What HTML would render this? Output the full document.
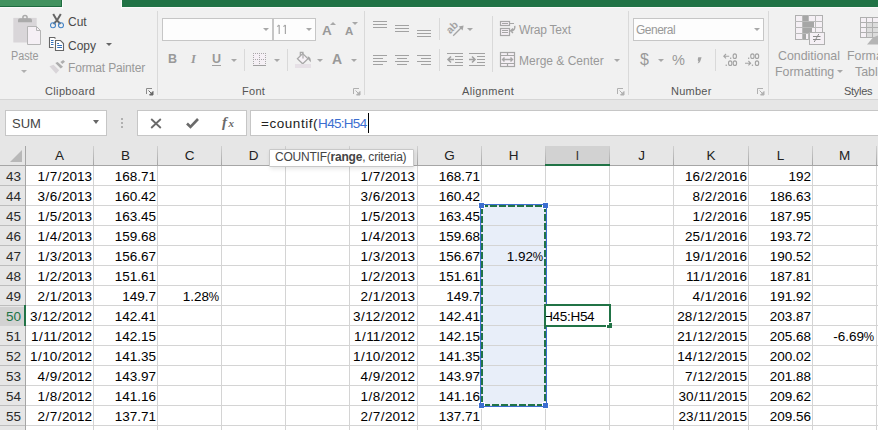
<!DOCTYPE html>
<html><head><meta charset="utf-8">
<style>
*{margin:0;padding:0;box-sizing:border-box}
html,body{width:878px;height:430px;overflow:hidden;background:#e6e6e6;font-family:"Liberation Sans",sans-serif;position:relative}
.a{position:absolute}
.t{position:absolute;white-space:nowrap;font-size:11.7px;line-height:14px;color:#444}
.dis{color:#999}
.lbl{position:absolute;white-space:nowrap;font-size:11.7px;line-height:14px;color:#555}
.sep{position:absolute;width:1px;background:#d9d9d9}
.dd{position:absolute;width:0;height:0;border-left:3px solid transparent;border-right:3px solid transparent;border-top:3px solid #a8a8a8}
.vl{position:absolute;top:166px;width:1px;height:264px;background:#d4d4d4}
.hv{position:absolute;top:146px;width:1px;height:19px;background:linear-gradient(#d0d0d0,#a6a6a6)}
.hl{position:absolute;left:26px;width:852px;height:1px;background:#d4d4d4}
.rh{position:absolute;left:0;width:25px;height:1px;background:#bdbdbd}
.ch{position:absolute;top:146px;height:19px;line-height:19px;text-align:center;font-size:13.5px;color:#222;white-space:nowrap}
.ch.sel{background:#d2d2d2;color:#3a3a3a;border-bottom:2px solid #217346;height:20px}
.rn{position:absolute;left:0;width:24px;height:19px;line-height:20px;text-align:right;padding-right:3px;font-size:13.5px;color:#2a2a2a}
.rn.sel{background:#d2d2d2;color:#217346}
.s{padding:0 .5px}
.pc{display:inline-block;transform:scaleX(.86);transform-origin:100% 50%;margin-left:-1.6px;margin-right:0.6px}
.c{position:absolute;height:19px;line-height:20px;font-size:13.5px;color:#000;white-space:nowrap;text-align:right}
</style></head><body>
<!-- top tab bar -->
<div class="a" style="left:0;top:0;width:878px;height:7px;background:#217346"></div>
<div class="a" style="left:0;top:0;width:62px;height:7px;background:#42925f;border-right:1px solid #1e6b3f;border-bottom:1px solid #1e6b3f"></div>
<div class="a" style="left:62px;top:0;width:60px;height:8px;background:#f1f1f1;border-left:1px solid #fbfbfb;border-right:1px solid #fbfbfb"></div>
<!-- ribbon -->
<div class="a" style="left:0;top:7px;width:878px;height:92px;background:#f1f1f1;border-top:1px solid #fafafa"></div>
<div class="a" style="left:62px;top:0;width:60px;height:9px;background:#f1f1f1;border-left:1px solid #fbfbfb;border-right:1px solid #fbfbfb"></div>
<div class="a" style="left:0;top:99px;width:878px;height:1px;background:#d5d5d5"></div>
<!-- Clipboard -->
<svg class="a" style="left:12px;top:14px" width="31" height="32" viewBox="0 0 31 32">
 <rect x="1.3" y="3.9" width="23.4" height="24.6" fill="#d9d6d9"/>
 <path d="M6 8.2V6.2Q6 4.3 8 4.3H18Q20 4.3 20 6.2V8.2Z" fill="#ababab"/>
 <circle cx="13" cy="3.6" r="2.1" fill="none" stroke="#ababab" stroke-width="1.5"/>
 <path d="M15.5 12.5H24.5L28.5 16.5V30.5H15.5Z" fill="#f5f0f5" stroke="#b5b5b5" stroke-width="1"/>
 <path d="M24.5 12.5V16.5H28.5" fill="none" stroke="#b5b5b5" stroke-width="1"/>
</svg>
<div class="t dis" style="left:11px;top:49px;font-size:12px;transform:scaleX(0.9);transform-origin:left">Paste</div>
<div class="dd" style="left:21px;top:70px;border-top-color:#b0b0b0;border-left-width:3px;border-right-width:3px;border-top-width:3px"></div>

<svg class="a" style="left:50px;top:12px" width="14" height="17" viewBox="0 0 14 17">
 <path d="M3.2 2L7 8.5L10.5 12M10.8 2L7 8.5L3.5 12" stroke="#666" stroke-width="2" fill="none"/>
 <circle cx="3" cy="13.3" r="2.5" fill="none" stroke="#4584c6" stroke-width="1.1"/>
 <circle cx="11" cy="13.3" r="2.5" fill="none" stroke="#4584c6" stroke-width="1.1"/>
</svg>
<div class="t" style="left:68px;top:15px;font-size:12px;color:#4a4a4a">Cut</div>

<svg class="a" style="left:48px;top:36px" width="17" height="16" viewBox="0 0 17 16">
 <path d="M1.5 1.5H6.5L7.5 2.5V11.5H1.5Z" fill="#fff"/>
 <path d="M5.5 11.5H1.5V1.5H6.5L7.5 2.5" fill="none" stroke="#666" stroke-width="1.1"/>
 <path d="M3 4.5H5.5M3 6.5H5.5M3 8.5H5.5" stroke="#3470b8" stroke-width="1"/>
 <path d="M7.5 4.5H12.5L15.5 7.5V14.5H7.5Z" fill="#fff" stroke="#666" stroke-width="1.1"/>
 <path d="M9.2 7.5H11M9.2 9.5H14M9.2 11.5H14" stroke="#3470b8" stroke-width="1"/>
</svg>
<div class="t" style="left:68px;top:39px;font-size:12px;color:#4a4a4a">Copy</div>
<div class="dd" style="left:106px;top:43px;border-top-color:#666;border-left-width:3px;border-right-width:3px"></div>

<svg class="a" style="left:49px;top:59px" width="17" height="16" viewBox="0 0 17 16">
 <path d="M0.5 7.2L4.5 5.8L10.2 11.2L7 14.7Z" fill="#d9d5d9"/>
 <path d="M6.3 4L8.6 3L14 7.7L11.7 9.6Z" fill="#adadad"/>
 <path d="M11.4 3L14.2 1L16 2.8L13.3 5.1Z" fill="#adadad"/>
</svg>
<div class="t dis" style="left:68px;top:61px;font-size:12px;letter-spacing:-0.17px">Format Painter</div>

<div class="lbl" style="left:45px;top:84px;font-size:11px;letter-spacing:0.35px">Clipboard</div>
<svg class="a" style="left:146px;top:88px" width="8" height="8" viewBox="0 0 8 8"><path d="M0.5 6V0.5H6" fill="none" stroke="#8a8a8a" stroke-width="1"/><path d="M2.5 2.5L7 7M7 3.5V7H3.5Z" stroke="#666" fill="#666" stroke-width="1"/></svg>
<div class="sep" style="left:157px;top:11px;height:84px"></div>

<!-- Font -->
<div class="a" style="left:162px;top:18px;width:111px;height:23px;background:#fdfdfd;border:1px solid #c6c6c6"></div>
<div class="a" style="left:273px;top:18px;width:43px;height:23px;background:#fdfdfd;border:1px solid #c6c6c6"></div>
<div class="dd" style="left:263px;top:28px"></div>
<div class="dd" style="left:306px;top:28px"></div>
<svg class="a" style="left:276px;top:24px" width="12" height="11" viewBox="0 0 12 11" stroke="#a8a8a8" stroke-width="1.2" fill="none"><path d="M3.2 1V10M1.2 2.6L3.2 1M9.4 1V10M7.4 2.6L9.4 1"/></svg>
<div class="t dis" style="left:322px;top:23px;font-size:13.5px;line-height:16px;font-weight:bold">A</div>
<div class="dd" style="left:330px;top:22px;border-top:none;border-bottom:3px solid #a8a8a8;border-left-width:3px;border-right-width:3px"></div>
<div class="t dis" style="left:345px;top:24px;font-size:11.5px;line-height:14px;font-weight:bold">A</div>
<div class="dd" style="left:352px;top:22px;border-top-width:3px;border-left-width:3px;border-right-width:3px"></div>

<div class="t dis" style="left:168px;top:52px;font-size:12.5px;font-weight:bold">B</div>
<div class="t dis" style="left:191px;top:52px;font-size:12.5px;font-family:'Liberation Serif',serif;font-style:italic;font-weight:bold">I</div>
<div class="t dis" style="left:212px;top:52px;font-size:12.5px;font-weight:bold">U</div>
<div class="a" style="left:212px;top:65px;width:9px;height:1px;background:#a0a0a0"></div>
<div class="dd" style="left:231px;top:59px"></div>
<div class="sep" style="left:244px;top:49px;height:22px"></div>
<svg class="a" style="left:252px;top:52px" width="15" height="15" viewBox="0 0 15 15">
 <rect x="1" y="1" width="13" height="12" fill="#f5f0f5"/>
 <path d="M1.5 1V13M7.5 1V13M13.5 1V13M1 1.5H14M1 7.5H14" stroke="#a8a8a8" stroke-width="1" stroke-dasharray="1 1"/>
 <path d="M1 13.5H14" stroke="#a0a0a0" stroke-width="1"/>
</svg>
<div class="dd" style="left:274px;top:59px"></div>
<div class="sep" style="left:287px;top:49px;height:22px"></div>
<svg class="a" style="left:295px;top:51px" width="17" height="18" viewBox="0 0 17 18">
 <path d="M2.4 7.7L7.7 2.6L13 7.7L7.7 12.8Z" fill="#f7f2f7" stroke="#a8a8a8" stroke-width="1.2"/>
 <path d="M5.3 4.8V1.3H8V7.5" stroke="#a8a8a8" stroke-width="1.2" fill="none"/>
 <path d="M12.6 5.2C15.2 5.8 16.2 8.2 15.8 11.3L13.4 8.6Z" fill="#a4a4a4"/>
 <rect x="0" y="13" width="16" height="4" fill="#e6e0e6"/>
</svg>
<div class="dd" style="left:317px;top:59px"></div>
<div class="t dis" style="left:332px;top:51px;font-size:14px;line-height:16px;font-weight:bold">A</div>
<div class="dd" style="left:351px;top:59px"></div>
<div class="lbl" style="left:242px;top:84px;font-size:11px;letter-spacing:0.3px">Font</div>
<svg class="a" style="left:353px;top:88px" width="8" height="8" viewBox="0 0 8 8"><path d="M0.5 6V0.5H6" fill="none" stroke="#b0b0b0" stroke-width="1"/><path d="M2.5 2.5L7 7M7 3.5V7H3.5Z" stroke="#b0b0b0" fill="#b0b0b0" stroke-width="1"/></svg>
<div class="sep" style="left:364px;top:11px;height:84px"></div>

<!-- Alignment -->
<svg class="a" style="left:370px;top:15px" width="64" height="54" viewBox="0 0 64 54" stroke="#a2a2a2" stroke-width="1">
 <path d="M3 6.5H17M3 9.5H17M3 12.5H17"/>
 <path d="M25 10.5H39M25 13.5H39M25 16.5H39"/>
 <path d="M47 15.5H61M47 18.5H61M47 21.5H61"/>
 <path d="M3 40.5H17M3 43.5H13M3 46.5H17M3 49.5H13"/>
 <path d="M25 40.5H39M27 43.5H37M25 46.5H39M27 49.5H37"/>
 <path d="M47 40.5H61M51 43.5H61M47 46.5H61M51 49.5H61"/>
</svg>
<div class="sep" style="left:439px;top:18px;height:22px"></div>
<div class="sep" style="left:439px;top:49px;height:22px"></div>
<svg class="a" style="left:446px;top:20px" width="20" height="17" viewBox="0 0 20 17">
 <text x="0" y="0" transform="translate(4.2,14.2) rotate(-45)" font-family="Liberation Sans" font-weight="bold" font-size="10.5" fill="#a4a4a4">ab</text>
 <path d="M7.2 15.8L15.5 7.5" stroke="#a4a4a4" stroke-width="1.3" fill="none"/>
 <path d="M17.6 5.4L12.6 6.4L16.6 10.4Z" fill="#a4a4a4"/>
</svg>
<div class="dd" style="left:467px;top:28px"></div>
<svg class="a" style="left:446px;top:51px" width="40" height="16" viewBox="0 0 40 16" stroke="#a2a2a2" stroke-width="1" fill="none">
 <path d="M1 2.5H17M9 5.5H17M9 8.5H17M9 11.5H17M1 14.5H17"/>
 <path d="M8 8.5H2M5 5.5L2 8.5L5 11.5" stroke-width="1.6"/>
 <path d="M23 2.5H39M31 5.5H39M31 8.5H39M31 11.5H39M23 14.5H39"/>
 <path d="M23 8.5H29M26 5.5L29 8.5L26 11.5" stroke-width="1.6"/>
</svg>
<div class="sep" style="left:492px;top:16px;height:56px"></div>
<svg class="a" style="left:499px;top:20px" width="18" height="17" viewBox="0 0 18 17" fill="none" stroke="#a6a6a6" stroke-width="1.2">
 <rect x="1.5" y="1.5" width="9" height="4" fill="#f5f0f5"/>
 <path d="M3 3.5H9M10.5 3.5H15"/>
 <rect x="1.5" y="8.5" width="9" height="7" fill="#f5f0f5"/>
 <path d="M3 10.5H9M3 12.5H9"/>
 <path d="M15.8 5.8C16.2 9 14.8 10.8 11.8 10.8M14 8.6L11.6 10.8L14 13" stroke-width="1.4"/>
</svg>
<div class="t dis" style="left:519px;top:23px;font-size:12px;letter-spacing:-0.2px">Wrap Text</div>
<svg class="a" style="left:499px;top:51px" width="17" height="17" viewBox="0 0 17 17" fill="none" stroke="#a6a6a6" stroke-width="1.2">
 <rect x="1.5" y="1.5" width="14" height="14" fill="#f5f0f5"/>
 <path d="M1.5 4.5H15.5M1.5 12.5H15.5M8.5 1.5V4.5M8.5 12.5V15.5"/>
 <path d="M3.5 8.5H13.5M5.5 6.5L3.5 8.5L5.5 10.5M11.5 6.5L13.5 8.5L11.5 10.5" stroke-width="1.4"/>
</svg>
<div class="t dis" style="left:519px;top:54px;font-size:12px">Merge &amp; Center</div>
<div class="dd" style="left:614px;top:59px"></div>
<div class="lbl" style="left:462px;top:84px;font-size:11px;letter-spacing:0.35px">Alignment</div>
<svg class="a" style="left:617px;top:88px" width="8" height="8" viewBox="0 0 8 8"><path d="M0.5 6V0.5H6" fill="none" stroke="#b0b0b0" stroke-width="1"/><path d="M2.5 2.5L7 7M7 3.5V7H3.5Z" stroke="#b0b0b0" fill="#b0b0b0" stroke-width="1"/></svg>
<div class="sep" style="left:628px;top:11px;height:84px"></div>

<!-- Number -->
<div class="a" style="left:633px;top:18px;width:131px;height:23px;background:#fdfdfd;border:1px solid #c6c6c6"></div>
<div class="t dis" style="left:636px;top:23px;font-size:12px;letter-spacing:-0.5px">General</div>
<div class="dd" style="left:754px;top:28px"></div>
<div class="t dis" style="left:640px;top:51px;font-size:16px;line-height:18px">$</div>
<div class="dd" style="left:658px;top:59px;border-left-width:3px;border-right-width:3px;border-top-width:3px"></div>
<div class="t dis" style="left:672px;top:52px;font-size:14.5px;line-height:16px">%</div>
<svg class="a" style="left:696px;top:56px" width="7" height="8" viewBox="0 0 7 8"><path d="M2.2 1.2H5.6L4.2 5.6Q3.6 7.2 1.6 7.4L2.6 5.4Q1.2 5 2.2 1.2Z" fill="#a4a4a4"/></svg>
<div class="sep" style="left:715px;top:49px;height:22px"></div>



<svg class="a" style="left:722px;top:53px" width="38" height="14" viewBox="0 0 38 14" fill="none" stroke="#a4a4a4" stroke-width="1.1">
 <path d="M1.8 3.2H7.2M4 1L1.8 3.2L4 5.4"/>
 <rect x="8" y="4.6" width="1.3" height="1.3" fill="#a4a4a4" stroke="none"/>
 <ellipse cx="12.8" cy="3.2" rx="1.7" ry="2.3"/>
 <rect x="3.6" y="11.6" width="1.3" height="1.3" fill="#a4a4a4" stroke="none"/>
 <ellipse cx="8.2" cy="10.2" rx="1.7" ry="2.3"/>
 <ellipse cx="12.9" cy="10.2" rx="1.7" ry="2.3"/>
 <rect x="26" y="4.6" width="1.3" height="1.3" fill="#a4a4a4" stroke="none"/>
 <ellipse cx="30.4" cy="3.2" rx="1.7" ry="2.3"/>
 <ellipse cx="35" cy="3.2" rx="1.7" ry="2.3"/>
 <path d="M23 10.2H28.6M26.4 8L28.6 10.2L26.4 12.4"/>
 <rect x="29.8" y="11.6" width="1.3" height="1.3" fill="#a4a4a4" stroke="none"/>
 <ellipse cx="35" cy="10.2" rx="1.7" ry="2.3"/>
</svg>
<div class="lbl" style="left:671px;top:84px;font-size:11px;letter-spacing:0.25px">Number</div>
<svg class="a" style="left:757px;top:88px" width="8" height="8" viewBox="0 0 8 8"><path d="M0.5 6V0.5H6" fill="none" stroke="#b0b0b0" stroke-width="1"/><path d="M2.5 2.5L7 7M7 3.5V7H3.5Z" stroke="#b0b0b0" fill="#b0b0b0" stroke-width="1"/></svg>
<div class="sep" style="left:768px;top:11px;height:84px"></div>

<!-- Styles -->
<svg class="a" style="left:795px;top:15px" width="31" height="31" viewBox="0 0 31 31">
 <rect x="0.5" y="0.5" width="27" height="24" fill="#f5f0f5" stroke="#b0b0b0"/>
 <path d="M7.5 0V25M13.5 0V25M20.5 0V25M0 6.5H28M0 12.5H28M0 18.5H28" stroke="#bababa" stroke-width="1"/>
 <rect x="8" y="1" width="5" height="5" fill="#a6a6a6"/>
 <rect x="8" y="7" width="11" height="5" fill="#a6a6a6"/>
 <rect x="8" y="13" width="9" height="5" fill="#a6a6a6"/>
 <rect x="8" y="19" width="3" height="5" fill="#a6a6a6"/>
 <rect x="14.5" y="17.5" width="15" height="12" fill="#f5f0f5" stroke="#b0b0b0"/>
 <path d="M18 21.5H25.5M18 24.5H25.5M23.8 19L19.2 27" stroke="#8a8a8a" stroke-width="1"/>
</svg>
<div class="t dis" style="left:778px;top:49px;font-size:12.4px">Conditional</div>
<div class="t dis" style="left:775px;top:65px;font-size:12.4px">Formatting</div>
<div class="dd" style="left:837px;top:70px;border-left-width:3px;border-right-width:3px;border-top-width:3px"></div>
<svg class="a" style="left:860px;top:17px" width="18" height="28" viewBox="0 0 18 28">
 <rect x="0.5" y="0.5" width="20" height="20" fill="#f5f0f5" stroke="#b0b0b0"/>
 <rect x="7" y="6" width="14" height="14" fill="#dcdcdc"/>
 <path d="M6.5 0V21M12.5 0V21M0 5.5H21M0 10.5H21M0 15.5H21" stroke="#b0b0b0" stroke-width="1"/>
 <path d="M7 27.5L13 20.5L18 18.5V27.5Z" fill="#b5b5b5"/>
</svg>
<div class="t dis" style="left:847px;top:49px;font-size:12.4px">Format as</div>
<div class="t dis" style="left:855px;top:65px;font-size:12.4px">Table</div>
<div class="lbl" style="left:844px;top:84px;font-size:11px;letter-spacing:-0.3px">Styles</div>

<!-- formula bar -->
<div class="a" style="left:5px;top:110px;width:102px;height:26px;background:#fff;border:1px solid #c6c6c6"></div>
<div class="t" style="left:12px;top:116px;font-size:13px;line-height:15px;color:#444">SUM</div>
<div class="dd" style="left:93px;top:120px;border-top-color:#666;border-left-width:3.5px;border-right-width:3.5px;border-top-width:4px"></div>
<div class="a" style="left:121px;top:118px;width:2px;height:2px;background:#b0b0b0"></div>
<div class="a" style="left:121px;top:122px;width:2px;height:2px;background:#b0b0b0"></div>
<div class="a" style="left:121px;top:126px;width:2px;height:2px;background:#b0b0b0"></div>
<div class="a" style="left:137px;top:110px;width:110px;height:26px;background:#fff;border:1px solid #c6c6c6"></div>
<svg class="a" style="left:150px;top:118px" width="12" height="11" viewBox="0 0 12 11"><path d="M1.2 1L10.8 10M10.8 1L1.2 10" stroke="#6a6a6a" stroke-width="1.8"/></svg>
<svg class="a" style="left:185px;top:117px" width="15" height="13" viewBox="0 0 15 13"><path d="M2 6.5L5.5 10L13 2" stroke="#6a6a6a" stroke-width="2.6" fill="none"/></svg>
<svg class="a" style="left:220px;top:114px" width="18" height="17" viewBox="0 0 18 17"><text x="2" y="13" font-family="Liberation Serif" font-style="italic" font-weight="bold" font-size="15" fill="#6a6a6a">f</text><text x="8.5" y="13" font-family="Liberation Serif" font-style="italic" font-weight="bold" font-size="11" fill="#6a6a6a">x</text></svg>
<div class="a" style="left:250px;top:110px;width:628px;height:26px;background:#fff;border:1px solid #c6c6c6;border-right:none"></div>
<div class="t" style="left:261px;top:116px;font-size:13.5px;line-height:16px;color:#222"><span style="letter-spacing:0.55px">=countif(</span><span style="color:#3c6ed0;letter-spacing:-0.7px">H45:H54</span></div>
<div class="a" style="left:368px;top:113px;width:1px;height:20px;background:#000"></div>
<!-- grid -->
<div style="position:absolute;left:26px;top:166px;width:852px;height:264px;background:#fff"></div>
<div style="position:absolute;left:481px;top:205px;width:65px;height:201px;background:#e8eef9"></div>
<div class="vl" style="left:93px"></div>
<div class="hv" style="left:93px"></div>
<div class="vl" style="left:157px"></div>
<div class="hv" style="left:157px"></div>
<div class="vl" style="left:221px"></div>
<div class="hv" style="left:221px"></div>
<div class="vl" style="left:285px"></div>
<div class="hv" style="left:285px"></div>
<div class="vl" style="left:349px"></div>
<div class="hv" style="left:349px"></div>
<div class="vl" style="left:417px"></div>
<div class="hv" style="left:417px"></div>
<div class="vl" style="left:481px"></div>
<div class="hv" style="left:481px"></div>
<div class="vl" style="left:545px"></div>
<div class="hv" style="left:545px"></div>
<div class="vl" style="left:609px"></div>
<div class="hv" style="left:609px"></div>
<div class="vl" style="left:673px"></div>
<div class="hv" style="left:673px"></div>
<div class="vl" style="left:748px"></div>
<div class="hv" style="left:748px"></div>
<div class="vl" style="left:812px"></div>
<div class="hv" style="left:812px"></div>
<div class="vl" style="left:876px"></div>
<div class="hv" style="left:876px"></div>
<div class="hl" style="top:185px"></div>
<div class="rh" style="top:185px"></div>
<div class="hl" style="top:205px"></div>
<div class="rh" style="top:205px"></div>
<div class="hl" style="top:225px"></div>
<div class="rh" style="top:225px"></div>
<div class="hl" style="top:245px"></div>
<div class="rh" style="top:245px"></div>
<div class="hl" style="top:265px"></div>
<div class="rh" style="top:265px"></div>
<div class="hl" style="top:285px"></div>
<div class="rh" style="top:285px"></div>
<div class="hl" style="top:305px"></div>
<div class="rh" style="top:305px"></div>
<div class="hl" style="top:325px"></div>
<div class="rh" style="top:325px"></div>
<div class="hl" style="top:345px"></div>
<div class="rh" style="top:345px"></div>
<div class="hl" style="top:365px"></div>
<div class="rh" style="top:365px"></div>
<div class="hl" style="top:385px"></div>
<div class="rh" style="top:385px"></div>
<div class="hl" style="top:405px"></div>
<div class="rh" style="top:405px"></div>
<div class="hl" style="top:425px"></div>
<div class="rh" style="top:425px"></div>
<div class="hl" style="top:445px"></div>
<div class="rh" style="top:445px"></div>
<div class="ch" style="left:26px;width:67px">A</div>
<div class="ch" style="left:94px;width:63px">B</div>
<div class="ch" style="left:158px;width:63px">C</div>
<div class="ch" style="left:222px;width:63px">D</div>
<div class="ch" style="left:286px;width:63px">E</div>
<div class="ch" style="left:350px;width:67px">F</div>
<div class="ch" style="left:418px;width:63px">G</div>
<div class="ch" style="left:482px;width:63px">H</div>
<div class="ch sel" style="left:546px;width:63px">I</div>
<div class="ch" style="left:610px;width:63px">J</div>
<div class="ch" style="left:674px;width:74px">K</div>
<div class="ch" style="left:749px;width:63px">L</div>
<div class="ch" style="left:813px;width:63px">M</div>
<div class="rn" style="top:167px">43</div>
<div class="rn" style="top:187px">44</div>
<div class="rn" style="top:207px">45</div>
<div class="rn" style="top:227px">46</div>
<div class="rn" style="top:247px">47</div>
<div class="rn" style="top:267px">48</div>
<div class="rn" style="top:287px">49</div>
<div class="rn sel" style="top:307px">50</div>
<div class="rn" style="top:327px">51</div>
<div class="rn" style="top:347px">52</div>
<div class="rn" style="top:367px">53</div>
<div class="rn" style="top:387px">54</div>
<div class="rn" style="top:407px">55</div>
<div class="c" style="top:167px;right:786px">1<span class="s">/</span>7<span class="s">/</span>2013</div>
<div class="c" style="top:167px;right:722px">168.71</div>
<div class="c" style="top:167px;right:463px">1<span class="s">/</span>7<span class="s">/</span>2013</div>
<div class="c" style="top:167px;right:398px">168.71</div>
<div class="c" style="top:167px;right:131px">16<span class="s">/</span>2<span class="s">/</span>2016</div>
<div class="c" style="top:167px;right:67px">192</div>
<div class="c" style="top:187px;right:786px">3<span class="s">/</span>6<span class="s">/</span>2013</div>
<div class="c" style="top:187px;right:722px">160.42</div>
<div class="c" style="top:187px;right:463px">3<span class="s">/</span>6<span class="s">/</span>2013</div>
<div class="c" style="top:187px;right:398px">160.42</div>
<div class="c" style="top:187px;right:131px">8<span class="s">/</span>2<span class="s">/</span>2016</div>
<div class="c" style="top:187px;right:67px">186.63</div>
<div class="c" style="top:207px;right:786px">1<span class="s">/</span>5<span class="s">/</span>2013</div>
<div class="c" style="top:207px;right:722px">163.45</div>
<div class="c" style="top:207px;right:463px">1<span class="s">/</span>5<span class="s">/</span>2013</div>
<div class="c" style="top:207px;right:398px">163.45</div>
<div class="c" style="top:207px;right:131px">1<span class="s">/</span>2<span class="s">/</span>2016</div>
<div class="c" style="top:207px;right:67px">187.95</div>
<div class="c" style="top:227px;right:786px">1<span class="s">/</span>4<span class="s">/</span>2013</div>
<div class="c" style="top:227px;right:722px">159.68</div>
<div class="c" style="top:227px;right:463px">1<span class="s">/</span>4<span class="s">/</span>2013</div>
<div class="c" style="top:227px;right:398px">159.68</div>
<div class="c" style="top:227px;right:131px">25<span class="s">/</span>1<span class="s">/</span>2016</div>
<div class="c" style="top:227px;right:67px">193.72</div>
<div class="c" style="top:247px;right:786px">1<span class="s">/</span>3<span class="s">/</span>2013</div>
<div class="c" style="top:247px;right:722px">156.67</div>
<div class="c" style="top:247px;right:463px">1<span class="s">/</span>3<span class="s">/</span>2013</div>
<div class="c" style="top:247px;right:398px">156.67</div>
<div class="c" style="top:247px;right:334px">1.92<span class="pc">%</span></div>
<div class="c" style="top:247px;right:131px">19<span class="s">/</span>1<span class="s">/</span>2016</div>
<div class="c" style="top:247px;right:67px">190.52</div>
<div class="c" style="top:267px;right:786px">1<span class="s">/</span>2<span class="s">/</span>2013</div>
<div class="c" style="top:267px;right:722px">151.61</div>
<div class="c" style="top:267px;right:463px">1<span class="s">/</span>2<span class="s">/</span>2013</div>
<div class="c" style="top:267px;right:398px">151.61</div>
<div class="c" style="top:267px;right:131px">11<span class="s">/</span>1<span class="s">/</span>2016</div>
<div class="c" style="top:267px;right:67px">187.81</div>
<div class="c" style="top:287px;right:786px">2<span class="s">/</span>1<span class="s">/</span>2013</div>
<div class="c" style="top:287px;right:722px">149.7</div>
<div class="c" style="top:287px;right:658px">1.28<span class="pc">%</span></div>
<div class="c" style="top:287px;right:463px">2<span class="s">/</span>1<span class="s">/</span>2013</div>
<div class="c" style="top:287px;right:398px">149.7</div>
<div class="c" style="top:287px;right:131px">4<span class="s">/</span>1<span class="s">/</span>2016</div>
<div class="c" style="top:287px;right:67px">191.92</div>
<div class="c" style="top:307px;right:786px">3<span class="s">/</span>12<span class="s">/</span>2012</div>
<div class="c" style="top:307px;right:722px">142.41</div>
<div class="c" style="top:307px;right:463px">3<span class="s">/</span>12<span class="s">/</span>2012</div>
<div class="c" style="top:307px;right:398px">142.41</div>
<div class="c" style="top:307px;right:131px">28<span class="s">/</span>12<span class="s">/</span>2015</div>
<div class="c" style="top:307px;right:67px">203.87</div>
<div class="c" style="top:327px;right:786px">1<span class="s">/</span>11<span class="s">/</span>2012</div>
<div class="c" style="top:327px;right:722px">142.15</div>
<div class="c" style="top:327px;right:463px">1<span class="s">/</span>11<span class="s">/</span>2012</div>
<div class="c" style="top:327px;right:398px">142.15</div>
<div class="c" style="top:327px;right:131px">21<span class="s">/</span>12<span class="s">/</span>2015</div>
<div class="c" style="top:327px;right:67px">205.68</div>
<div class="c" style="top:327px;right:3px">-6.69<span class="pc">%</span></div>
<div class="c" style="top:347px;right:786px">1<span class="s">/</span>10<span class="s">/</span>2012</div>
<div class="c" style="top:347px;right:722px">141.35</div>
<div class="c" style="top:347px;right:463px">1<span class="s">/</span>10<span class="s">/</span>2012</div>
<div class="c" style="top:347px;right:398px">141.35</div>
<div class="c" style="top:347px;right:131px">14<span class="s">/</span>12<span class="s">/</span>2015</div>
<div class="c" style="top:347px;right:67px">200.02</div>
<div class="c" style="top:367px;right:786px">4<span class="s">/</span>9<span class="s">/</span>2012</div>
<div class="c" style="top:367px;right:722px">143.97</div>
<div class="c" style="top:367px;right:463px">4<span class="s">/</span>9<span class="s">/</span>2012</div>
<div class="c" style="top:367px;right:398px">143.97</div>
<div class="c" style="top:367px;right:131px">7<span class="s">/</span>12<span class="s">/</span>2015</div>
<div class="c" style="top:367px;right:67px">201.88</div>
<div class="c" style="top:387px;right:786px">1<span class="s">/</span>8<span class="s">/</span>2012</div>
<div class="c" style="top:387px;right:722px">141.16</div>
<div class="c" style="top:387px;right:463px">1<span class="s">/</span>8<span class="s">/</span>2012</div>
<div class="c" style="top:387px;right:398px">141.16</div>
<div class="c" style="top:387px;right:131px">30<span class="s">/</span>11<span class="s">/</span>2015</div>
<div class="c" style="top:387px;right:67px">209.62</div>
<div class="c" style="top:407px;right:786px">2<span class="s">/</span>7<span class="s">/</span>2012</div>
<div class="c" style="top:407px;right:722px">137.71</div>
<div class="c" style="top:407px;right:463px">2<span class="s">/</span>7<span class="s">/</span>2012</div>
<div class="c" style="top:407px;right:398px">137.71</div>
<div class="c" style="top:407px;right:131px">23<span class="s">/</span>11<span class="s">/</span>2015</div>
<div class="c" style="top:407px;right:67px">209.56</div>
<!-- header bottom & row header line -->
<div class="a" style="left:0;top:165px;width:878px;height:1px;background:#a6a6a6"></div>
<div class="a" style="left:25px;top:146px;width:1px;height:284px;background:#a6a6a6"></div>
<div class="ch sel" style="left:546px;width:63px">I</div>
<div class="a" style="left:545px;top:164px;width:65px;height:2px;background:#217346"></div>
<div class="a" style="left:24px;top:305px;width:2px;height:21px;background:#217346"></div>
<!-- corner triangle -->
<svg class="a" style="left:9px;top:149px" width="14" height="14" viewBox="0 0 14 14"><path d="M13 1V13H1Z" fill="#b8b8b8"/></svg>
<!-- selection H45:H54 -->
<svg class="a" style="left:478px;top:202px" width="72" height="208" viewBox="0 0 72 208">
 <g stroke="#217346" stroke-width="2" fill="none" stroke-dasharray="7 2">
  <path d="M3 4H65"/>
  <path d="M5 203H65"/>
  <path d="M4 5V201"/>
  <path d="M67 3V201"/>
 </g>
</svg>
<div class="a" style="left:478px;top:202px;width:7px;height:7px;background:#fff;border:1px solid #fff"></div>
<div class="a" style="left:542px;top:202px;width:7px;height:7px;background:#fff;border:1px solid #fff"></div>
<div class="a" style="left:478px;top:402px;width:7px;height:7px;background:#fff;border:1px solid #fff"></div>
<div class="a" style="left:542px;top:402px;width:7px;height:7px;background:#fff;border:1px solid #fff"></div>
<div class="a" style="left:480px;top:204px;width:67px;height:203px;border:1px solid #3c6ed0"></div>
<div class="a" style="left:479px;top:203px;width:5px;height:5px;background:#3c6ed0"></div>
<div class="a" style="left:543px;top:203px;width:5px;height:5px;background:#3c6ed0"></div>
<div class="a" style="left:479px;top:403px;width:5px;height:5px;background:#3c6ed0"></div>
<div class="a" style="left:543px;top:403px;width:5px;height:5px;background:#3c6ed0"></div>
<!-- active cell I50 -->
<div class="a" style="left:546px;top:306px;width:63px;height:19px;overflow:hidden;background:#fff">
 <div class="c" style="top:1px;right:14.7px;letter-spacing:-0.3px">=countif(H45:H54</div>
</div>
<div class="a" style="left:544px;top:304px;width:67px;height:23px;border:2px solid #217346"></div>
<div class="a" style="left:606px;top:322px;width:6px;height:6px;background:#fff"></div>
<div class="a" style="left:607px;top:323px;width:5px;height:5px;background:#217346"></div>
<div class="a" style="left:607px;top:323px;width:2px;height:2px;background:#fff"></div>
<!-- tooltip -->
<div class="a" style="left:269px;top:149px;width:145px;height:18px;background:#fff;border:1px solid #c8c8c8;border-radius:1px;box-shadow:1px 2px 4px rgba(0,0,0,0.10)"></div>
<div class="t" style="left:275px;top:150px;font-size:12px;line-height:14px;color:#444;letter-spacing:-0.22px">COUNTIF(<b>range</b>, criteria)</div>

</body></html>
